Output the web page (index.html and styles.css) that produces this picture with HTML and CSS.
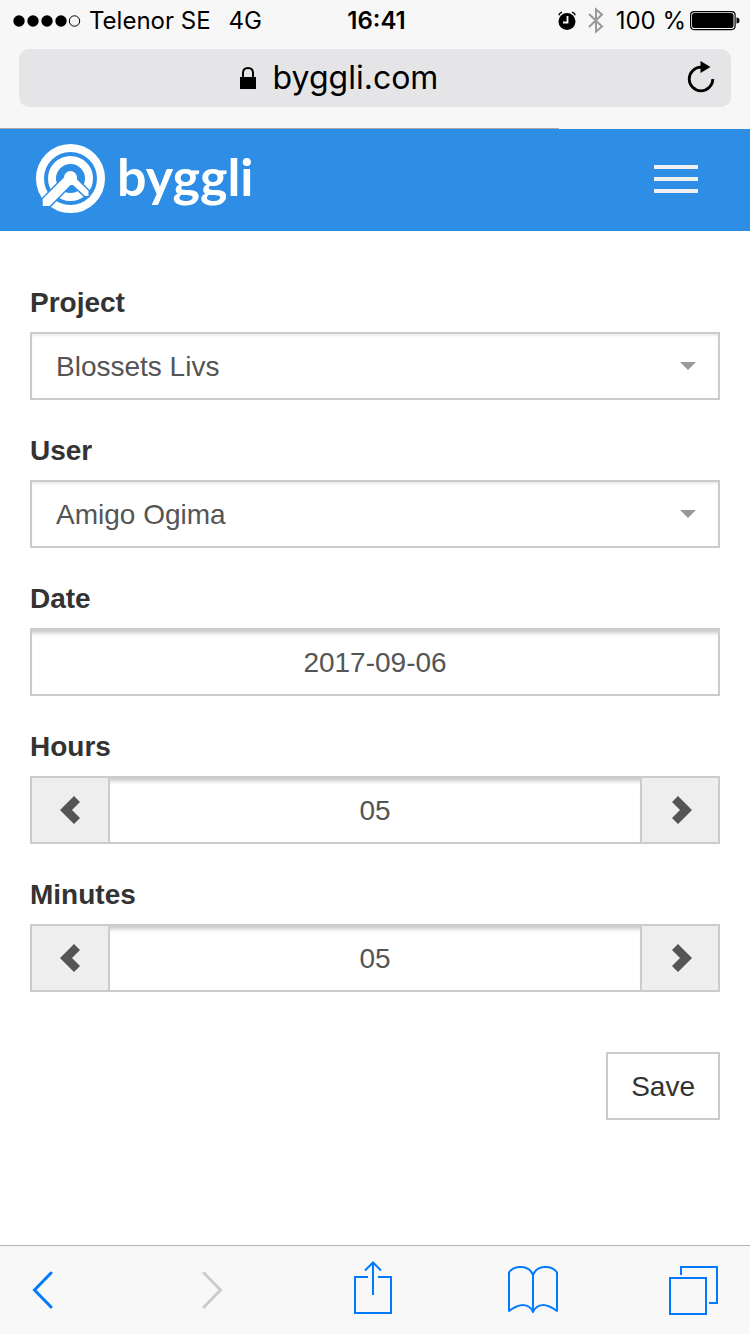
FILE: index.html
```html
<!DOCTYPE html>
<html lang="en">
<head>
<meta charset="utf-8">
<meta name="viewport" content="width=device-width, initial-scale=1">
<title>byggli</title>
<link rel="stylesheet" href="styles.css">
</head>
<body>
<div class="chrome">
  <div class="status">
    <div class="status-side">
      <svg class="signal" width="68" height="12" viewBox="0 0 68 12" role="img" aria-label="Signal 4 of 5">
        <circle cx="6" cy="6" r="5.700"/><circle cx="20" cy="6" r="5.700"/><circle cx="34" cy="6" r="5.700"/><circle cx="48" cy="6" r="5.700"/>
        <circle cx="61.500" cy="6" r="5.200" fill="none" stroke="#000"/>
      </svg>
      <span>Telenor SE</span>
      <span class="network">4G</span>
    </div>
    <time class="clock">16:41</time>
    <div class="status-side status-end">
      <svg class="alarm" width="18" height="20" viewBox="0 0 18 20" aria-hidden="true">
        <circle cx="9" cy="10.500" r="8.500"/>
        <path d="M.8 4.200Q1.500 1.800 4 1.300M14 1.300Q16.500 1.800 17.200 4.200" fill="none" stroke="#000" stroke-width="1.400"/>
        <path d="M9.500 5v6.500H5" fill="none" stroke="#f7f7f7" stroke-width="1.800"/>
      </svg>
      <svg class="bluetooth" width="16" height="27" viewBox="0 0 16 27" aria-hidden="true">
        <path d="M1 7l13 12.500-6 5V2.500l6 5L1 20" fill="none" stroke="#999" stroke-width="2"/>
      </svg>
      <span>100 %</span>
      <svg class="battery" width="50" height="20" viewBox="0 0 50 20" role="img" aria-label="Battery full">
        <rect x=".6" y=".6" width="44.500" height="18" rx="3.500" fill="none" stroke="#000" stroke-width="1.200"/>
        <rect x="2" y="2" width="41.500" height="15" rx="2.500"/>
        <path d="M46.500 6.500q3 0 3 3t-3 3z"/>
      </svg>
    </div>
  </div>
  <div class="address">
    <div class="site">
      <svg width="16" height="23" viewBox="0 0 16 23" aria-hidden="true">
        <rect y="10" width="16" height="12"/>
        <path d="M3 11V6q0-5 5-5t5 5v5" fill="none" stroke="#000" stroke-width="2"/>
      </svg>
      <span>byggli.com</span>
    </div>
    <button class="icon-button reload" type="button" aria-label="Reload">
      <svg width="28" height="34" viewBox="0 0 28 34" aria-hidden="true">
        <path d="M14 6.200A11.800 11.800 0 1 0 25.800 18" fill="none" stroke="#000" stroke-width="2.800"/>
        <path d="M13.500 0l10 6-10 6z"/>
      </svg>
    </button>
  </div>
  <div class="progress"><div class="progress-bar"></div></div>
</div>

<header class="navbar">
  <a class="brand" href="#">
    <svg width="69" height="69" viewBox="0 0 69 69" aria-hidden="true">
      <circle cx="34.500" cy="34.500" r="30.500" fill="none" stroke="#fff" stroke-width="8"/>
      <circle cx="34.500" cy="34.500" r="18.500" fill="none" stroke="#fff" stroke-width="8"/>
      <path d="M28 33.500L6.700 55v7h7L34.500 41H37L49 52h3.500V47L41 35.500V33.500A6.500 6.500 0 0 0 28 33.500z" fill="#fff" stroke="#2e8de5" stroke-width="3" paint-order="stroke"/>
    </svg>
    <span>byggli</span>
  </a>
  <button class="menu" type="button" aria-label="Menu"><i></i><i></i><i></i></button>
</header>

<main class="page">
  <form>
    <div class="group">
      <label for="project">Project</label>
      <div class="select">
        <select id="project" class="field"><option>Blossets Livs</option></select>
        <i class="caret"></i>
      </div>
    </div>
    <div class="group">
      <label for="user">User</label>
      <div class="select">
        <select id="user" class="field"><option>Amigo Ogima</option></select>
        <i class="caret"></i>
      </div>
    </div>
    <div class="group">
      <label for="date">Date</label>
      <input id="date" class="field centered" type="text" value="2017-09-06">
    </div>
    <div class="group">
      <label for="hours">Hours</label>
      <div class="stepper">
        <button type="button" aria-label="Fewer hours"><svg width="20" height="28" viewBox="0 0 20 28"><path d="M14 0l6 6-8 8 8 8-6 6L0 14z"/></svg></button>
        <input id="hours" class="field centered" type="text" value="05">
        <button type="button" aria-label="More hours"><svg width="20" height="28" viewBox="0 0 20 28"><path d="M6 0L0 6l8 8-8 8 6 6 14-14z"/></svg></button>
      </div>
    </div>
    <div class="group">
      <label for="minutes">Minutes</label>
      <div class="stepper">
        <button type="button" aria-label="Fewer minutes"><svg width="20" height="28" viewBox="0 0 20 28"><path d="M14 0l6 6-8 8 8 8-6 6L0 14z"/></svg></button>
        <input id="minutes" class="field centered" type="text" value="05">
        <button type="button" aria-label="More minutes"><svg width="20" height="28" viewBox="0 0 20 28"><path d="M6 0L0 6l8 8-8 8 6 6 14-14z"/></svg></button>
      </div>
    </div>
    <div class="actions"><button class="save" type="submit">Save</button></div>
  </form>
</main>

<nav class="toolbar" aria-label="Browser">
  <button class="icon-button" type="button" aria-label="Back">
    <svg width="22" height="38" viewBox="0 0 22 38"><path d="M19 2L2.500 19 19 36" stroke-width="3" stroke-linecap="round"/></svg>
  </button>
  <button class="icon-button forward" type="button" aria-label="Forward" disabled>
    <svg width="22" height="38" viewBox="0 0 22 38"><path d="M3 2l16.500 17L3 36" stroke-width="3" stroke-linecap="round"/></svg>
  </button>
  <button class="icon-button" type="button" aria-label="Share">
    <svg width="38" height="58" viewBox="0 0 38 58"><path d="M14 16H1v36h36V16H24M19 34V1.500M11 9.500l8-8 8 8" stroke-width="2"/></svg>
  </button>
  <button class="icon-button" type="button" aria-label="Bookmarks">
    <svg width="50" height="48" viewBox="0 0 50 48"><path d="M25 46V9C21-1.500 6-1 1 6.500V45C12 37 21 37 25 46 29 37 38 37 49 45V6.500C44-1 29-1.500 25 9" stroke-width="2" stroke-linejoin="round"/></svg>
  </button>
  <button class="icon-button" type="button" aria-label="Tabs">
    <svg width="50" height="50" viewBox="0 0 50 50"><path d="M1 13h36v36H1zM12 10V2h36v36h-8" stroke-width="2"/></svg>
  </button>
</nav>
</body>
</html>
```
FILE: styles.css
```css
* { box-sizing: border-box; }

body {
  display: flex;
  flex-direction: column;
  min-height: 100vh;
  margin: 0;
  background: #fff;
  color: #333;
  font: 28px/40px "Liberation Sans", Arial, sans-serif;
}

button, input, select { margin: 0; font: inherit; color: inherit; }
button { padding: 0; cursor: pointer; }
svg { display: block; flex: none; }

.chrome { background: #f7f7f7; color: #000; font-family: Inter, sans-serif; }

.status {
  display: grid;
  grid-template-columns: 1fr auto 1fr;
  align-items: center;
  height: 41px;
  padding: 0 10px 0 13px;
  font-size: 24px;
}
.status-side { display: flex; align-items: center; gap: 8px; }
.status-end { justify-content: flex-end; }
.network { margin-left: 10px; }
.clock { font-weight: 600; }
.bluetooth { margin: 0 4px; }
.battery { margin-left: -4px; }

.address {
  display: flex;
  align-items: center;
  height: 58px;
  margin: 8px 19px 21px;
  padding-right: 16px;
  border-radius: 10px;
  background: #e5e5e8;
  font-size: 32px;
}
.site {
  display: flex;
  flex: 1;
  align-items: center;
  justify-content: center;
  gap: 17px;
  padding-right: 28px;
}

.icon-button { border: 0; background: none; }

.progress { height: 1px; }
.progress-bar { width: 74.5%; height: 1px; background: #a9a9ac; }

.navbar {
  display: flex;
  align-items: center;
  justify-content: space-between;
  height: 102px;
  padding: 0 52px 3px 36px;
  background: #2e8de5;
}
.brand {
  display: flex;
  align-items: center;
  gap: 12px;
  color: #fff;
  font: 700 52px/60px Lato, sans-serif;
  text-decoration: none;
}
.brand span { padding-bottom: 6px; }
.menu { display: grid; gap: 8px; width: 44px; border: 0; background: none; }
.menu i { height: 4px; background: #eef0f2; }

.page { flex: 1; padding: 52px 30px 40px; }
.group { margin-bottom: 31px; }
.group label { display: block; margin-bottom: 9px; font-weight: 700; }

.field {
  display: block;
  width: 100%;
  height: 68px;
  padding: 2px 24px 0;
  border: 2px solid #ccc;
  border-radius: 0;
  background: #fff;
  box-shadow: inset 0 2px 2px rgba(0, 0, 0, 0.075);
  color: #555;
  appearance: none;
}
.centered {
  box-shadow: inset 0 6px 4px -3px rgba(0, 0, 0, 0.22);
  text-align: center;
}

.select { display: grid; align-items: center; }
.select > * { grid-area: 1 / 1; }
.caret {
  justify-self: end;
  margin-right: 24px;
  border: 8px solid transparent;
  border-top-color: #999;
  border-bottom: 0;
  pointer-events: none;
}

.stepper { display: flex; }
.stepper button {
  display: grid;
  flex: none;
  place-items: center;
  width: 80px;
  border: 2px solid #ccc;
  background: #eee;
}
.stepper button:last-child { padding-left: 4px; }
.stepper svg { fill: #555; }
.stepper .field { flex: 1; min-width: 0; margin: 0 -2px; }

.actions { display: flex; justify-content: flex-end; padding-top: 29px; }
.save { height: 68px; padding: 2px 23px 0; border: 2px solid #ccc; background: #fff; }

.toolbar {
  display: flex;
  align-items: center;
  justify-content: space-between;
  height: 89px;
  padding: 0 18px;
  padding-right: 31px;
  border-top: 1px solid #b2b2b2;
  background: #f8f8f8;
}
.toolbar .icon-button { display: grid; place-items: center; width: 50px; }
.toolbar .forward { margin-left: 8px; }
.toolbar svg { fill: none; stroke: #007aff; }
.toolbar button:disabled svg { stroke: #ccc; }
```
